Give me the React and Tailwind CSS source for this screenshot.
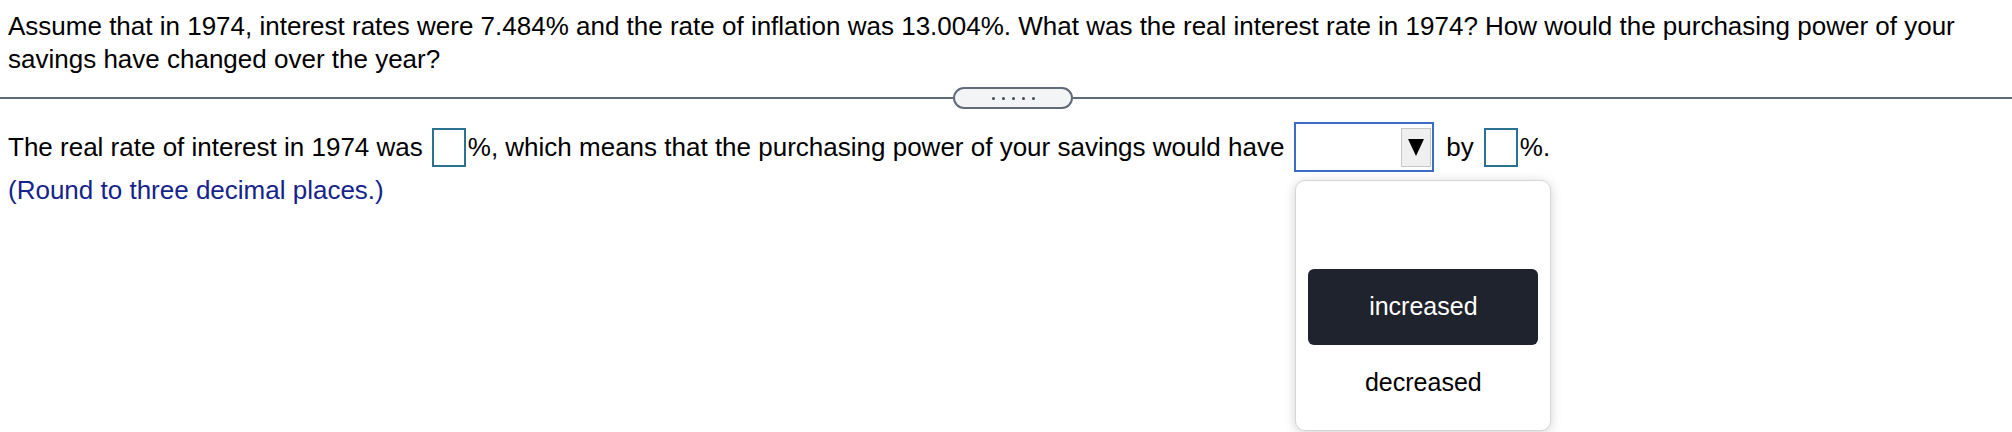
import React from 'react';

const AnswerBox = () => (
  <span className="block w-[34px] h-[39px] border-2 border-[#2c7192] bg-white" />
);

const Dropdown = () => (
  <span className="relative flex">
    <span className="flex items-center justify-end w-[140px] h-[50px] border-2 border-[#3a6bc6] bg-white pr-[1px]">
      <span className="flex items-center justify-center w-[30px] h-[39px] bg-[#efefef] border border-[#c6c6c6]">
        <svg width="16" height="17" viewBox="0 0 16 17">
          <polygon points="0,0 16,0 8,17" fill="#000" />
        </svg>
      </span>
    </span>
    <div className="absolute left-[1px] top-[58px] w-[256px] h-[251px] bg-white border border-[#d6d6d6] rounded-[10px] shadow-[0_2px_12px_rgba(0,0,0,0.18)] px-[12px] pt-[12px] font-['Liberation_Sans',Arial,sans-serif]">
      <div className="h-[76px]" />
      <div className="flex items-center justify-center h-[76px] rounded-[6px] bg-[#1f232d] text-white text-[25px]">
        increased
      </div>
      <div className="flex items-center justify-center h-[76px] text-black text-[25px]">
        decreased
      </div>
    </div>
  </span>
);

export default function App() {
  return (
    <div className="w-[2012px] h-[432px] overflow-hidden bg-white text-black font-['Liberation_Sans',Arial,Helvetica,sans-serif]">
      <p className="pl-[8px] pt-[10px] text-[26px] leading-[33px]">
        Assume that in 1974, interest rates were 7.484% and the rate of inflation was 13.004%. What was the real interest rate in 1974? How would the purchasing power of your
        <br />
        savings have changed over the year?
      </p>

      <div className="flex items-center h-[22px] mt-[11px]">
        <div className="w-[953px] h-[2px] bg-[#5f6b78]" />
        <div className="flex items-center justify-center gap-[7px] w-[120px] h-[22px] rounded-full border-2 border-[#5f6b78] bg-[#f3f4f6]">
          {[0, 1, 2, 3, 4].map(i => (
            <span key={i} className="w-[3px] h-[3px] rounded-full bg-[#3f4750]" />
          ))}
        </div>
        <div className="flex-1 h-[2px] bg-[#5f6b78]" />
      </div>

      <div className="flex items-center h-[50px] mt-[13px] pl-[8px] text-[26px] whitespace-nowrap">
        <span>The real rate of interest in 1974 was</span>
        <span className="ml-[9px] flex"><AnswerBox /></span>
        <span className="ml-[2px]">%, which means that the purchasing power of your savings would have</span>
        <span className="ml-[10px] flex"><Dropdown /></span>
        <span className="ml-[12px]">by</span>
        <span className="ml-[10px] flex"><AnswerBox /></span>
        <span className="ml-[2px]">%.</span>
      </div>

      <p className="pl-[8px] mt-[2px] text-[26px] leading-[33px] text-[#15248a]">
        (Round to three decimal places.)
      </p>
    </div>
  );
}
